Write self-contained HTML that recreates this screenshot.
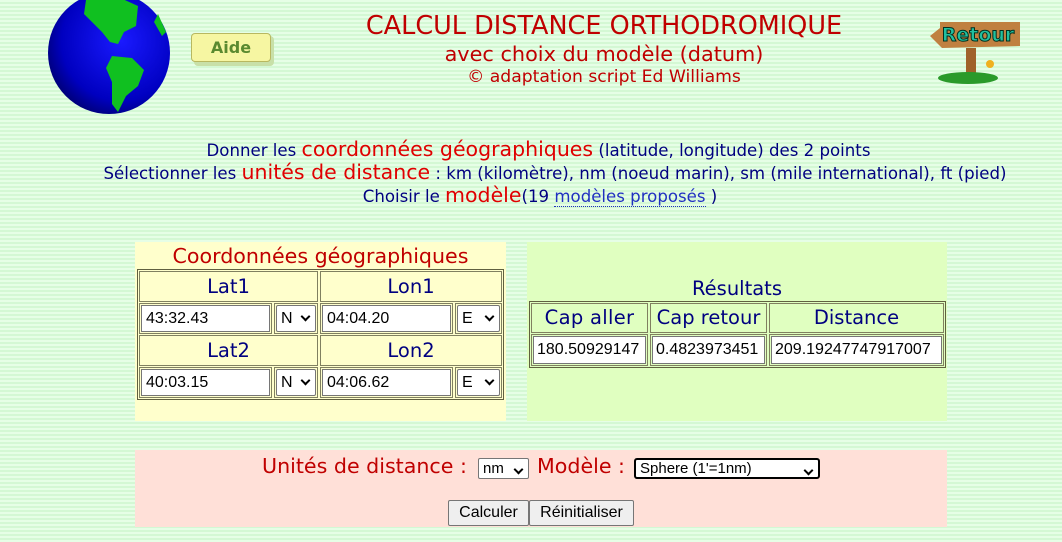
<!DOCTYPE html>
<html><head><meta charset="utf-8"><style>
*{box-sizing:border-box;margin:0;padding:0}
body{width:1062px;height:542px;overflow:hidden;position:relative;background:#dcfcdc;font-family:"DejaVu Sans",Verdana,sans-serif;
background-image:repeating-linear-gradient(0deg,#e6fee6 0 2px,#d4f8d4 2px 4px);}
.a{position:absolute;white-space:nowrap}
.c{text-align:center}
.red{color:#c00000}
.blue{color:#000080}
.r2{color:#e00000}
.inp{position:absolute;background:#fff;border:1px solid #767676;font-family:"Liberation Sans",Arial,sans-serif;font-size:16px;color:#000;padding-left:4px;line-height:25px;overflow:hidden;white-space:nowrap}
.sel{position:absolute;background:#fff;border:1px solid #767676;border-radius:2px;font-family:"Liberation Sans",Arial,sans-serif;font-size:16px;color:#000;padding-left:4px;line-height:25px}
.sel:after{content:"";position:absolute;right:6px;top:7px;width:5px;height:5px;border-right:2px solid #000;border-bottom:2px solid #000;transform:rotate(45deg)}
.cell{position:absolute;border:1px solid #808060;}
.btn{position:absolute;background:#efefef;border:1px solid #767676;border-radius:2px;font-family:"Liberation Sans",Arial,sans-serif;font-size:16px;text-align:center;line-height:24px}
</style></head><body>
<svg class="a" style="left:46px;top:-8px" width="126" height="122" viewBox="0 0 126 122">
<defs><radialGradient id="g" cx="0.6" cy="0.4" r="0.7"><stop offset="0" stop-color="#1a1aff"/><stop offset="0.7" stop-color="#0000c0"/><stop offset="1" stop-color="#000060"/></radialGradient></defs>
<circle cx="63" cy="61" r="61" fill="url(#g)"/>
<path d="M40 8 L70 4 L92 14 L90 34 L78 40 L72 52 L64 50 L56 40 L46 30 L38 22 Z" fill="#10c020"/>
<path d="M66 64 L86 66 L98 78 L92 94 L80 104 L72 120 L66 112 L66 90 L60 76 Z" fill="#10c020"/>
<path d="M112 22 L120 40 L116 44 L108 30 Z" fill="#10c020"/>
</svg>
<div class="a" style="left:194px;top:36px;width:80px;height:30px;background:#c8e0a8;border-radius:4px"></div>
<div class="a c" style="left:191px;top:33px;width:80px;height:29px;background:#f6f6a2;border:1px solid #b8b860;border-radius:4px;color:#5a8a30;font-weight:bold;font-size:16px;line-height:27px">Aide</div>
<div class="a c red" style="left:304px;top:11px;width:600px;font-size:25.5px">CALCUL DISTANCE ORTHODROMIQUE</div>
<div class="a c red" style="left:304px;top:42px;width:600px;font-size:20.8px">avec choix du modèle (datum)</div>
<div class="a c red" style="left:304px;top:67px;width:600px;font-size:17.2px">© adaptation script Ed Williams</div>
<svg class="a" style="left:928px;top:16px" width="94" height="68" viewBox="0 0 94 68">
<rect x="38" y="32" width="10" height="28" fill="#a0622a"/>
<ellipse cx="40" cy="62" rx="30" ry="6" fill="#2a9a2a"/>
<path d="M12 6 L92 6 L92 30 L14 32 L2 20 L12 12 Z" fill="#c08040"/>
<text x="50" y="25" text-anchor="middle" font-family="DejaVu Sans" font-weight="bold" font-size="19" fill="#20c0a0" stroke="#003020" stroke-width="1">Retour</text>
<circle cx="62" cy="48" r="4" fill="#f0b020"/>
</svg>
<div class="a c blue" style="left:0;top:137px;width:1062px;font-size:16.6px;padding-left:15px">Donner les <span class="r2" style="font-size:20.5px">coordonnées géographiques</span> (latitude, longitude) des 2 points</div>
<div class="a c blue" style="left:0;top:160px;width:1062px;font-size:16.6px;padding-left:48px">Sélectionner les <span class="r2" style="font-size:20.5px">unités de distance</span> : km (kilomètre), nm (noeud marin), sm (mile international), ft (pied)</div>
<div class="a c blue" style="left:0;top:183px;width:1062px;font-size:16.6px;padding-left:18px">Choisir le <span class="r2" style="font-size:20.5px">modèle</span>(19 <span style="color:#2030c0;border-bottom:1px dotted #2030c0">modèles proposés</span> )</div>
<div class="a" style="left:135px;top:242px;width:371px;height:179px;background:#ffffcc"></div>
<div class="a c red" style="left:135px;top:244px;width:371px;font-size:20.6px">Coordonnées géographiques</div>
<div class="a" style="left:137px;top:269px;width:367px;height:131px;border:1px solid #606040"></div>
<div class="cell" style="left:139px;top:271px;width:179px;height:31px"></div>
<div class="cell" style="left:320px;top:271px;width:182px;height:31px"></div>
<div class="cell" style="left:139px;top:303px;width:133px;height:31px"></div>
<div class="cell" style="left:274px;top:303px;width:44px;height:31px"></div>
<div class="cell" style="left:320px;top:303px;width:133px;height:31px"></div>
<div class="cell" style="left:455px;top:303px;width:47px;height:31px"></div>
<div class="cell" style="left:139px;top:335px;width:179px;height:31px"></div>
<div class="cell" style="left:320px;top:335px;width:182px;height:31px"></div>
<div class="cell" style="left:139px;top:367px;width:133px;height:31px"></div>
<div class="cell" style="left:274px;top:367px;width:44px;height:31px"></div>
<div class="cell" style="left:320px;top:367px;width:133px;height:31px"></div>
<div class="cell" style="left:455px;top:367px;width:47px;height:31px"></div>
<div class="a c blue" style="left:139px;top:275px;width:179px;font-size:19.5px">Lat1</div>
<div class="a c blue" style="left:320px;top:275px;width:182px;font-size:19.5px">Lon1</div>
<div class="a c blue" style="left:139px;top:339px;width:179px;font-size:19.5px">Lat2</div>
<div class="a c blue" style="left:320px;top:339px;width:182px;font-size:19.5px">Lon2</div>
<div class="inp" style="left:141px;top:305px;width:129px;height:27px">43:32.43</div>
<div class="sel" style="left:276px;top:305px;width:40px;height:27px">N</div>
<div class="inp" style="left:322px;top:305px;width:129px;height:27px">04:04.20</div>
<div class="sel" style="left:457px;top:305px;width:43px;height:27px">E</div>
<div class="inp" style="left:141px;top:369px;width:129px;height:27px">40:03.15</div>
<div class="sel" style="left:276px;top:369px;width:40px;height:27px">N</div>
<div class="inp" style="left:322px;top:369px;width:129px;height:27px">04:06.62</div>
<div class="sel" style="left:457px;top:369px;width:43px;height:27px">E</div>
<div class="a" style="left:527px;top:242px;width:420px;height:179px;background:#e0ffc0"></div>
<div class="a c blue" style="left:527px;top:277px;width:420px;font-size:19.5px">Résultats</div>
<div class="a" style="left:529px;top:301px;width:417px;height:67px;border:1px solid #606040"></div>
<div class="cell" style="left:531px;top:303px;width:117px;height:30px"></div>
<div class="cell" style="left:650px;top:303px;width:117px;height:30px"></div>
<div class="cell" style="left:769px;top:303px;width:175px;height:30px"></div>
<div class="cell" style="left:531px;top:334px;width:117px;height:32px"></div>
<div class="cell" style="left:650px;top:334px;width:117px;height:32px"></div>
<div class="cell" style="left:769px;top:334px;width:175px;height:32px"></div>
<div class="a c blue" style="left:531px;top:306px;width:117px;font-size:19.5px;letter-spacing:0.3px">Cap aller</div>
<div class="a c blue" style="left:650px;top:306px;width:117px;font-size:19.5px">Cap retour</div>
<div class="a c blue" style="left:769px;top:306px;width:175px;font-size:19.5px">Distance</div>
<div class="inp" style="left:533px;top:336px;width:113px;height:28px;padding-left:3px">180.50929147</div>
<div class="inp" style="left:652px;top:336px;width:113px;height:28px;padding-left:3px">0.4823973451</div>
<div class="inp" style="left:771px;top:336px;width:171px;height:28px;padding-left:3px">209.19247747917007</div>
<div class="a" style="left:135px;top:450px;width:812px;height:77px;background:#ffe0d8"></div>
<div class="a red" style="left:262px;top:454px;font-size:20.6px">Unités de distance :</div>
<div class="sel" style="left:478px;top:458px;width:51px;height:21px;line-height:19px;font-size:15px">nm</div>
<div class="a red" style="left:537px;top:454px;font-size:20.6px">Modèle :</div>
<div class="sel" style="left:634px;top:458px;width:186px;height:21px;line-height:18px;font-size:15px;border:2px solid #000;border-radius:3px">Sphere (1'=1nm)</div>
<div class="btn" style="left:448px;top:500px;width:81px;height:26px">Calculer</div>
<div class="btn" style="left:529px;top:500px;width:105px;height:26px">Réinitialiser</div>
</body></html>
